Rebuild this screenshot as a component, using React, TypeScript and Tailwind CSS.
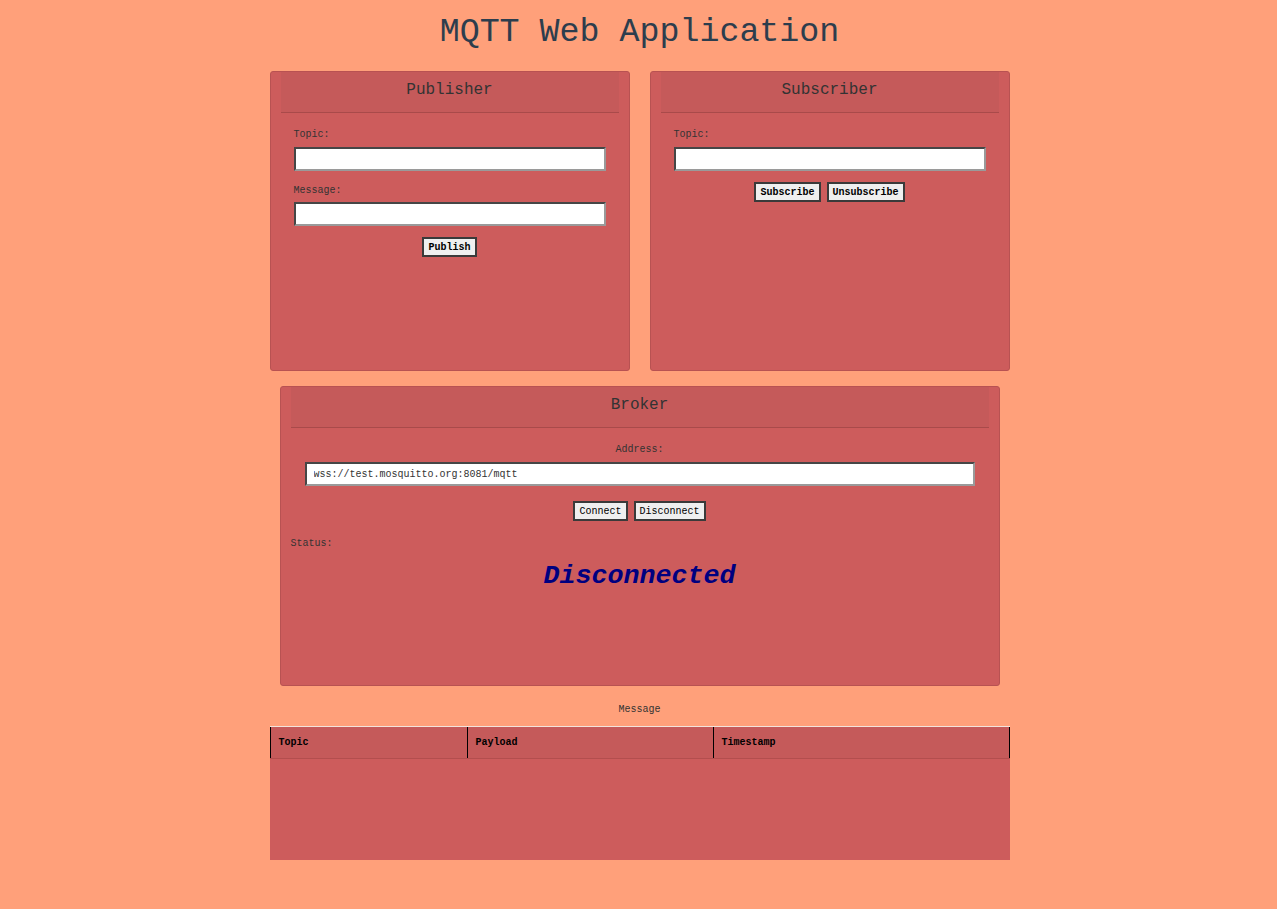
const mono = { fontFamily: '"Liberation Mono", "Courier New", monospace' }

function Panel({ title, width, children }: { title: string; width: string; children: React.ReactNode }) {
  return (
    <div className={`${width} h-[300px] bg-[#CD5C5C] border border-[#b85252] rounded-[3px] px-[10px]`}>
      <div className="h-[41px] bg-[#C55A5A] border-b border-[#a94a4a] pt-[8px] text-center text-[16px] leading-[20px] text-[#333]">
        {title}
      </div>
      {children}
    </div>
  )
}

function Btn({ label, bold = true }: { label: string; bold?: boolean }) {
  return (
    <button
      className={`h-[20px] px-[4px] pt-[1px] bg-[#efefef] border-2 border-[#3a3a3a] text-[10px] leading-[15px] text-black ${bold ? 'font-bold' : 'font-normal'}`}
      style={mono}
    >
      {label}
    </button>
  )
}

function Field({ value }: { value?: string }) {
  return (
    <input
      readOnly
      value={value ?? ''}
      className="block w-full h-[24px] bg-white border-2 border-[#9a9a9a] [border-style:inset] pl-[7px] text-[10px] text-[#333] outline-none"
      style={mono}
    />
  )
}

export default function App() {
  return (
    <div className="min-h-screen bg-[#FFA07A] pl-[2px] pb-[49px]" style={mono}>
      <h1 className="pt-[12px] text-center text-[33.3px] leading-[40px] text-[#2d3d4d] font-normal">
        MQTT Web Application
      </h1>

      <div className="mt-[19px] flex justify-center gap-[20px]">
        <Panel title="Publisher" width="w-[360px]">
          <div className="px-[13px] pt-[16px] text-[10px] leading-[12px] text-[#333]">
            <div className="mb-[6px]">Topic:</div>
            <Field />
            <div className="mt-[14px] mb-[5px]">Message:</div>
            <Field />
            <div className="mt-[11px] flex justify-center">
              <Btn label="Publish" />
            </div>
          </div>
        </Panel>
        <Panel title="Subscriber" width="w-[360px]">
          <div className="px-[13px] pt-[16px] text-[10px] leading-[12px] text-[#333]">
            <div className="mb-[6px]">Topic:</div>
            <Field />
            <div className="mt-[11px] flex justify-center gap-[6px]">
              <Btn label="Subscribe" />
              <Btn label="Unsubscribe" />
            </div>
          </div>
        </Panel>
      </div>

      <div className="mt-[15px] flex justify-center">
        <Panel title="Broker" width="w-[720px]">
          <div className="pt-[16px] text-[10px] leading-[12px] text-[#333]">
            <div className="mb-[6px] text-center">Address:</div>
            <div className="px-[14px]">
              <Field value="wss://test.mosquitto.org:8081/mqtt" />
            </div>
            <div className="mt-[15px] flex justify-center gap-[6px]">
              <Btn label="Connect" bold={false} />
              <Btn label="Disconnect" bold={false} />
            </div>
            <div className="mt-[17px]">Status:</div>
            <div className="mt-[10px] text-center text-[26.7px] leading-[32px] font-bold italic text-[#000080]">
              Disconnected
            </div>
          </div>
        </Panel>
      </div>

      <div className="mt-[18px] text-center text-[10px] leading-[12px] text-[#333]">Message</div>

      <div className="mt-[10px] mx-auto w-[740px]">
        <div className="grid grid-cols-[197px_246px_297px] h-[33px] bg-[#C55A5A] border-t border-[#f3e4dc] border-b border-b-[#b34e4e]">
          {['Topic', 'Payload', 'Timestamp'].map((h, i) => (
            <div
              key={h}
              className={`flex items-center pl-[8px] border-l border-black text-[10px] font-bold text-black ${i === 2 ? 'border-r' : ''}`}
            >
              {h}
            </div>
          ))}
        </div>
        <div className="h-[101px] bg-[#CD5C5C]" />
      </div>
    </div>
  )
}
